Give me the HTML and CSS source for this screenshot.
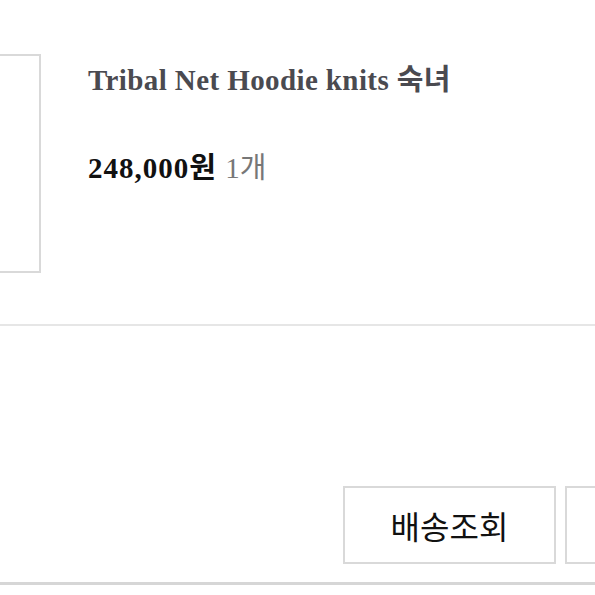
FILE: index.html
```html
<!DOCTYPE html>
<html lang="ko">
<head>
    <meta charset="UTF-8">
    <meta name="viewport" content="width=device-width, initial-scale=1.0">
    <title>주문 내역</title>
    <link rel="stylesheet" href="styles.css">
</head>
<body>
    <div class="order">
        <!-- Product row -->
        <div class="order-item">
            <div class="thumb"></div>
            <div class="item-info">
                <p class="item-name">Tribal Net Hoodie knits 숙녀</p>
                <p class="item-price">248,000원 <span class="item-qty">1개</span></p>
            </div>
        </div>

        <!-- Actions -->
        <div class="order-actions">
            <button class="action-button">배송조회</button>
            <button class="action-button">구매확정</button>
        </div>
    </div>
</body>
</html>
```

FILE: styles.css
```css
body {
    margin: 0;
    padding: 0;
    background-color: #fff;
    font-family: "Liberation Serif", "Noto Sans CJK KR", serif;
    overflow: hidden;
}

.order {
    width: 595px;
}

/* Product row */
.order-item {
    display: flex;
    align-items: flex-start;
    padding-top: 54px;
    height: 270px;
    border-bottom: 2px solid #e6e6e6;
}

.thumb {
    flex: none;
    width: 218px;
    height: 215px;
    margin-left: -181px;
    border: 2px solid #d9d9d9;
    background-color: #fff;
}

.item-info {
    margin-left: 47px;
}

.item-name {
    margin: 0;
    padding-top: 11px;
    font-size: 29px;
    line-height: 30px;
    font-weight: bold;
    letter-spacing: 0.4px;
    color: #4a4a50;
    white-space: nowrap;
}

.item-price {
    margin: 58px 0 0 0;
    font-size: 29px;
    line-height: 30px;
    font-weight: bold;
    letter-spacing: 1px;
    color: #111;
    white-space: nowrap;
}

.item-qty {
    font-weight: normal;
    letter-spacing: 0;
    color: #777;
}

/* Actions */
.order-actions {
    display: flex;
    justify-content: flex-end;
    gap: 9px;
    padding: 160px 0 18px 0;
    margin-right: -183px;
    border-bottom: 3px solid #d6d6d6;
}

.action-button {
    width: 213px;
    height: 78px;
    padding: 0;
    background-color: #fff;
    border: 2px solid #d9d9d9;
    font-family: "Noto Sans CJK KR", sans-serif;
    font-size: 32px;
    color: #111;
    cursor: pointer;
}
```
